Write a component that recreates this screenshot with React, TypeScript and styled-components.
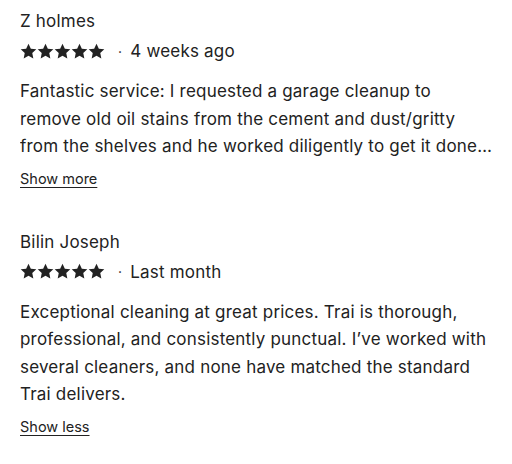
import React from 'react';
import styled, { createGlobalStyle } from 'styled-components';

const GlobalStyle = createGlobalStyle`
  body {
    margin: 0;
    background: #ffffff;
    font-family: Inter, "Noto Sans", sans-serif;
    color: #222222;
  }
`;

const List = styled.div`
  display: flex;
  flex-direction: column;
  gap: 41px;
  padding: 9px 16px 9px 20px;
`;

const Review = styled.article`
  display: flex;
  flex-direction: column;
`;

const Name = styled.div`
  font-size: 17px;
  line-height: 24px;
  letter-spacing: 0.2px;
`;

const Meta = styled.div`
  display: flex;
  align-items: center;
  height: 24px;
  margin-top: 6px;
  font-size: 17px;
  letter-spacing: 0.2px;
`;

const Stars = styled.div`
  display: flex;
`;

const Dot = styled.span`
  margin: 0 8px 0 13px;
  font-size: 14px;
`;

const Body = styled.p<{ $clamp?: boolean }>`
  margin: 15px 0 0;
  font-size: 17px;
  line-height: 27.5px;
  letter-spacing: 0.2px;
  ${(p) =>
    p.$clamp &&
    `
    display: -webkit-box;
    -webkit-line-clamp: 3;
    -webkit-box-orient: vertical;
    overflow: hidden;
  `}
`;

const Toggle = styled.button`
  align-self: flex-start;
  margin-top: 8px;
  padding: 0;
  border: none;
  background: none;
  font-family: inherit;
  font-size: 14.5px;
  line-height: 20px;
  color: #222222;
  text-decoration: underline;
  text-underline-offset: 3px;
  cursor: pointer;
`;

const Star = () => (
  <svg width="17" height="17" viewBox="0 0 24 24" fill="#222222">
    <path d="M12 1l3.3 7 7.7.9-5.7 5.3 1.5 7.6L12 18l-6.8 3.8 1.5-7.6L1 8.9 8.7 8z" />
  </svg>
);

interface ReviewData {
  name: string;
  when: string;
  text: string;
  toggle: string;
  clamp: boolean;
}

const reviews: ReviewData[] = [
  {
    name: 'Z holmes',
    when: '4 weeks ago',
    text: 'Fantastic service: I requested a garage cleanup to remove old oil stains from the cement and dust/gritty from the shelves and he worked diligently to get it done\u2026',
    toggle: 'Show more',
    clamp: true,
  },
  {
    name: 'Bilin Joseph',
    when: 'Last month',
    text: 'Exceptional cleaning at great prices. Trai is thorough, professional, and consistently punctual. I\u2019ve worked with several cleaners, and none have matched the standard Trai delivers.',
    toggle: 'Show less',
    clamp: false,
  },
];

export default function App() {
  return (
    <>
      <GlobalStyle />
      <List>
        {reviews.map((r) => (
          <Review key={r.name}>
            <Name>{r.name}</Name>
            <Meta>
              <Stars>
                {[0, 1, 2, 3, 4].map((i) => (
                  <Star key={i} />
                ))}
              </Stars>
              <Dot>·</Dot>
              <span>{r.when}</span>
            </Meta>
            <Body $clamp={r.clamp}>{r.text}</Body>
            <Toggle>{r.toggle}</Toggle>
          </Review>
        ))}
      </List>
    </>
  );
}
